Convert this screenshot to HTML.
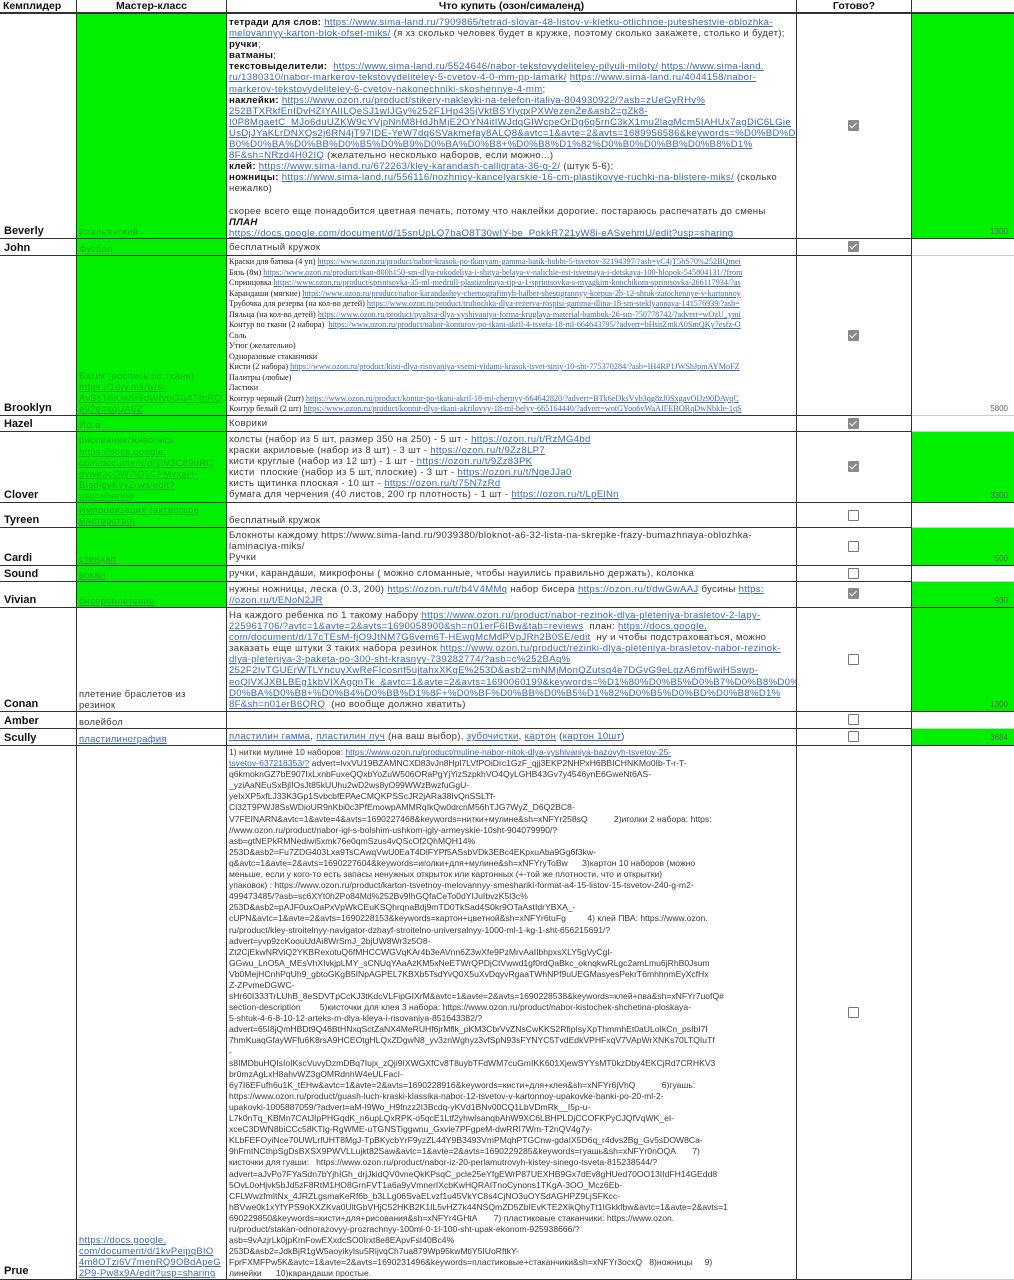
<!DOCTYPE html>
<html><head><meta charset="utf-8">
<style>
*{margin:0;padding:0;box-sizing:border-box}
body{width:1014px;height:1280px;background:#fff;position:relative;overflow:hidden;font-family:"Liberation Sans","Noto Sans CJK SC",sans-serif;color:#3a3a3a}
.c{position:absolute;border-right:1px solid #333;border-bottom:1px solid #333;overflow:hidden}
.g{background:#00f000}
.n{font-weight:bold;font-size:11px;color:#111;display:flex;align-items:flex-end;padding:0 0 0 4px;line-height:13px}
.m{font-size:9.4px;letter-spacing:.3px;line-height:11.1px;display:flex;flex-direction:column;justify-content:flex-end;padding:0 2px 1px 2px}
.g.m,.g.m a{color:#1fae1f}
.t{font-size:9.6px;letter-spacing:.3px;line-height:11.1px;padding:3px 0 0 2px;white-space:nowrap;color:#3a3a3a}
.t.p{font-size:8.6px;letter-spacing:0}
.t div,.m div{white-space:nowrap}
a{color:#3d6ab6;text-decoration:underline}
.t.s{font-family:"Liberation Serif",serif;font-size:8.2px;letter-spacing:0;line-height:10.5px;color:#222}
.h{font-weight:bold;font-size:10.5px;color:#111;text-align:center;line-height:12px;border-bottom:2px solid #333}
.ck{position:absolute;width:11px;height:11px;border:1.5px solid #777;border-radius:1px;background:#fff}
.ck.on{background:#8a8a8a;border-color:#8a8a8a}
.ck.on::after{content:"";position:absolute;left:2px;top:0px;width:3px;height:6px;border:solid #fff;border-width:0 1.5px 1.5px 0;transform:rotate(45deg)}
.v{position:absolute;font-size:8px;color:#666;right:6px}
b{color:#111}
</style></head><body>

<div class="c h" style="left:0;top:0;width:77px;height:14px;text-align:left;padding-left:3px">Кемплидер</div>
<div class="c h" style="left:77px;top:0;width:150px;height:14px">Мастер-класс</div>
<div class="c h" style="left:227px;top:0;width:570px;height:14px">Что купить (озон/сималенд)</div>
<div class="c h" style="left:797px;top:0;width:115px;height:14px">Готово?</div>
<div class="c h" style="left:912px;top:0;width:102px;height:14px;border-right:none"></div>

<!-- Beverly -->
<div class="c n" style="left:0;top:14px;width:77px;height:225px">Beverly</div>
<div class="c g m" style="left:77px;top:14px;width:150px;height:225px"><div>Итальянский</div></div>
<div class="c t" style="left:227px;top:14px;width:570px;height:225px">
<div><b>тетради для слов:</b> <a>https://www.sima-land.ru/7909865/tetrad-slovar-48-listov-v-kletku-otlichnoe-puteshestvie-oblozhka-</a></div>
<div><a>melovannyy-karton-blok-ofset-miks/</a> (я хз сколько человек будет в кружке, поэтому сколько закажете, столько и будет);</div>
<div><b>ручки</b>;</div>
<div><b>ватманы</b>;</div>
<div><b>текстовыделители:</b> &nbsp;<a>https://www.sima-land.ru/5524646/nabor-tekstovydeliteley-pilyuli-miloty/</a> <a>https://www.sima-land.</a></div>
<div><a>ru/1380310/nabor-markerov-tekstovydeliteley-5-cvetov-4-0-mm-pp-lamark/</a> <a>https://www.sima-land.ru/4044158/nabor-</a></div>
<div><a>markerov-tekstovydeliteley-6-cvetov-nakonechniki-skoshennye-4-mm</a>;</div>
<div><b>наклейки:</b> <a>https://www.ozon.ru/product/stikery-nakleyki-na-telefon-italiya-804930922/?asb=zUeGyRHv%</a></div>
<div><a>252BTXRkfEnIDvHZIYAIILQeSJ1wIJGy%252F1Hp435jVktBSYlyqxPXWezenZe&amp;asb2=gZk8-</a></div>
<div><a>I0P8MqaetC_MJo6duUZKW9cYVjpNnM8HdJhMjE2OYN4itIWJdqGIWcpeOrDg6q5rnC3kX1mu2lagMcm5IAHUx7agDiC6LGie</a></div>
<div><a>UsDjJYaKLrDNXQs2j6RN4jT97IDE-YeW7dq6SVakmefay8ALQ8&amp;avtc=1&amp;avte=2&amp;avts=1689956586&amp;keywords=%D0%BD%D0%</a></div>
<div><a>B0%D0%BA%D0%BB%D0%B5%D0%B9%D0%BA%D0%B8+%D0%B8%D1%82%D0%B0%D0%BB%D0%B8%D1%</a></div>
<div><a>8F&amp;sh=NRzd4H02IQ</a> (желательно несколько наборов, если можно...)</div>
<div><b>клей:</b> <a>https://www.sima-land.ru/672263/kley-karandash-calligrata-36-g-2/</a> (штук 5-6);</div>
<div><b>ножницы:</b> <a>https://www.sima-land.ru/556116/nozhnicy-kancelyarskie-16-cm-plastikovye-ruchki-na-blistere-miks/</a> (сколько</div>
<div>нежалко)</div>
<div>&nbsp;</div>
<div>скорее всего еще понадобится цветная печать, потому что наклейки дорогие. постараюсь распечатать до смены</div>
<div><b><i>ПЛАН</i></b></div>
<div><a>https://docs.google.com/document/d/15snUpLQ7baO8T30wIY-be_PokkR721yW8i-eASvehmU/edit?usp=sharing</a></div>
</div>
<div class="c" style="left:797px;top:14px;width:115px;height:225px"><div class="ck on" style="left:51px;top:106px"></div></div>
<div class="c g" style="left:912px;top:14px;width:102px;height:225px;border-right:none"><span class="v" style="bottom:2px">1300</span></div>

<!-- John -->
<div class="c n" style="left:0;top:239px;width:77px;height:17px">John</div>
<div class="c g m" style="left:77px;top:239px;width:150px;height:17px"><div>Футбол</div></div>
<div class="c t" style="left:227px;top:239px;width:570px;height:17px"><div>бесплатный кружок</div></div>
<div class="c" style="left:797px;top:239px;width:115px;height:17px"><div class="ck on" style="left:51px;top:2px"></div></div>
<div class="c" style="left:912px;top:239px;width:102px;height:17px;border-right:none;border-bottom-color:#ccc"></div>

<!-- Brooklyn -->
<div class="c n" style="left:0;top:256px;width:77px;height:160px">Brooklyn</div>
<div class="c g m" style="left:77px;top:256px;width:150px;height:160px"><div>Батик (роспись по ткани)</div><div><a>https://1drv.ms/w/s!</a></div><div><a>AvBsThiOxSr5gWfvgOG4TfhRQ</a></div><div><a>e9?e=xqUA6Z</a></div></div>
<div class="c t s" style="left:227px;top:256px;width:570px;height:160px;padding-top:1px">
<div>Краски для батика (4 уп) <a>https://www.ozon.ru/product/nabor-krasok-po-tkanyam-gamma-batik-hobbi-5-tsvetov-32194397/?asb=yC4jT5hS70%252BQmei</a></div>
<div>Бязь (8м) <a>https://www.ozon.ru/product/tkan-800h150-sm-dlya-rukodeliya-i-shitya-belaya-v-nalichie-est-tsvetnaya-i-detskaya-100-hlopok-545804131/?from</a></div>
<div>Спринцовка <a>https://www.ozon.ru/product/sprintsovka-35-ml-medrull-plastizolnaya-tip-a-1-sprintsovka-s-myagkim-konchikom-sprintsovka-266117934/?as</a></div>
<div>Карандаши (мягкие) <a>https://www.ozon.ru/product/nabor-karandashey-chernografitnyh-halber-shestigrannyy-korpus-2b-12-shtuk-zatochennye-v-kartonnoy</a></div>
<div>Трубочка для резерва (на кол-во детей) <a>https://www.ozon.ru/product/trubochka-dlya-rezerva-rospisi-gamma-dlina-18-sm-steklyannaya-141576939/?asb=</a></div>
<div>Пяльца (на кол-во детей) <a>https://www.ozon.ru/product/pyaltsa-dlya-vyshivaniya-forma-kruglaya-material-bambuk-26-sm-750778742/?advert=wOzU_ymi</a></div>
<div>Контур по ткани (2 набора) &nbsp;<a>https://www.ozon.ru/product/nabor-konturov-po-tkani-akril-4-tsveta-18-ml-664643795/?advert=bHsitZmkA0SmQKy7esfz-O</a></div>
<div>Соль</div>
<div>Утюг (желательно)</div>
<div>Одноразовые стаканчики</div>
<div>Кисти (2 набора) <a>https://www.ozon.ru/product/kisti-dlya-risovaniya-vsemi-vidami-krasok-tsvet-siniy-10-sht-775370284/?asb=IH4RP1JWShJpmAYMoFZ</a></div>
<div>Палитры (любые)</div>
<div>Ластики</div>
<div>Контур черный (2шт) <a>https://www.ozon.ru/product/kontur-po-tkani-akril-18-ml-chernyy-664642820/?advert=BTk6eDksVvb3qg8zJ0SxgavOIJz90DAyqC</a></div>
<div>Контур белый (2 шт) <a>https://www.ozon.ru/product/kontur-dlya-tkani-akrilovyy-18-ml-belyy-665164440/?advert=wotGYoo6vWaAIFEBORqDwNbkle-1qS</a></div>
</div>
<div class="c" style="left:797px;top:256px;width:115px;height:160px"><div class="ck on" style="left:51px;top:74px"></div></div>
<div class="c" style="left:912px;top:256px;width:102px;height:160px;border-right:none;border-bottom-color:#ccc"><span class="v" style="bottom:2px">5800</span></div>

<!-- Hazel -->
<div class="c n" style="left:0;top:416px;width:77px;height:16px">Hazel</div>
<div class="c g m" style="left:77px;top:416px;width:150px;height:16px"><div>Йога</div></div>
<div class="c t" style="left:227px;top:416px;width:570px;height:16px;padding-top:2px"><div>Коврики</div></div>
<div class="c" style="left:797px;top:416px;width:115px;height:16px"><div class="ck on" style="left:51px;top:2px"></div></div>
<div class="c" style="left:912px;top:416px;width:102px;height:16px;border-right:none;border-bottom-color:#ccc"></div>

<!-- Clover -->
<div class="c n" style="left:0;top:432px;width:77px;height:71px">Clover</div>
<div class="c g m" style="left:77px;top:432px;width:150px;height:71px"><div>рисование/живопись</div><div><a>https://docs.google.</a></div><div><a>com/document/d/1W3C89uRC</a></div><div><a>dvwe3cOW7lQ1CFMvxaH-</a></div><div><a>BIsdigyKvyZrws/edit?</a></div><div><a>usp=sharing</a></div></div>
<div class="c t" style="left:227px;top:432px;width:570px;height:71px;padding-top:2px">
<div>холсты (набор из 5 шт, размер 350 на 250) - 5 шт - <a>https://ozon.ru/t/RzMG4bd</a></div>
<div>краски акриловые (набор из 8 шт) - 3 шт - <a>https://ozon.ru/t/9Zz8LP7</a></div>
<div>кисти круглые (набор из 12 шт) - 1 шт - <a>https://ozon.ru/t/9Zz83PK</a></div>
<div>кисти &nbsp;плоские (набор из 5 шт, плоские) - 3 шт - <a>https://ozon.ru/t/NgeJJa0</a></div>
<div>кисть щитинка плоская - 10 шт - <a>https://ozon.ru/t/75N7zRd</a></div>
<div>бумага для черчения (40 листов, 200 гр плотность) - 1 шт - <a>https://ozon.ru/t/LpElNn</a></div>
</div>
<div class="c" style="left:797px;top:432px;width:115px;height:71px"><div class="ck on" style="left:51px;top:29px"></div></div>
<div class="c g" style="left:912px;top:432px;width:102px;height:71px;border-right:none"><span class="v" style="bottom:2px">3300</span></div>

<!-- Tyreen -->
<div class="c n" style="left:0;top:503px;width:77px;height:25px">Tyreen</div>
<div class="c g m" style="left:77px;top:503px;width:150px;height:25px"><div><a>Импровизация (актёрское</a></div><div><a>мастерство)</a></div></div>
<div class="c t" style="left:227px;top:503px;width:570px;height:25px;padding-top:12px"><div>бесплатный кружок</div></div>
<div class="c" style="left:797px;top:503px;width:115px;height:25px"><div class="ck" style="left:51px;top:7px"></div></div>
<div class="c" style="left:912px;top:503px;width:102px;height:25px;border-right:none;border-bottom-color:#ccc"></div>

<!-- Cardi -->
<div class="c n" style="left:0;top:528px;width:77px;height:38px">Cardi</div>
<div class="c g m" style="left:77px;top:528px;width:150px;height:38px"><div><a>стендап</a></div></div>
<div class="c t" style="left:227px;top:528px;width:570px;height:38px;padding-top:2px">
<div>Блокноты каждому https://www.sima-land.ru/9039380/bloknot-a6-32-lista-na-skrepke-frazy-bumazhnaya-oblozhka-</div>
<div>laminaciya-miks/</div><div>Ручки</div></div>
<div class="c" style="left:797px;top:528px;width:115px;height:38px"><div class="ck" style="left:51px;top:13px"></div></div>
<div class="c g" style="left:912px;top:528px;width:102px;height:38px;border-right:none"><span class="v" style="bottom:2px">500</span></div>

<!-- Sound -->
<div class="c n" style="left:0;top:566px;width:77px;height:16px">Sound</div>
<div class="c g m" style="left:77px;top:566px;width:150px;height:16px"><div><a>вокал</a></div></div>
<div class="c t" style="left:227px;top:566px;width:570px;height:16px;padding-top:2px"><div>ручки, карандаши, микрофоны ( можно сломанные, чтобы науились правильно держать), колонка</div></div>
<div class="c" style="left:797px;top:566px;width:115px;height:16px"><div class="ck" style="left:51px;top:2px"></div></div>
<div class="c" style="left:912px;top:566px;width:102px;height:16px;border-right:none;border-bottom-color:#ccc"></div>

<!-- Vivian -->
<div class="c n" style="left:0;top:582px;width:77px;height:26px">Vivian</div>
<div class="c g m" style="left:77px;top:582px;width:150px;height:26px"><div><a>бисероплетение</a></div></div>
<div class="c t" style="left:227px;top:582px;width:570px;height:26px;padding-top:2px">
<div>нужны ножницы, леска (0.3, 200) <a>https://ozon.ru/t/b4V4MMq</a> набор бисера <a>https://ozon.ru/t/dwGwAAJ</a> бусины <a>https:</a></div>
<div><a>//ozon.ru/t/ENoN2JR</a></div></div>
<div class="c" style="left:797px;top:582px;width:115px;height:26px"><div class="ck on" style="left:51px;top:6px"></div></div>
<div class="c g" style="left:912px;top:582px;width:102px;height:26px;border-right:none"><span class="v" style="bottom:2px">930</span></div>

<!-- Conan -->
<div class="c n" style="left:0;top:608px;width:77px;height:104px">Conan</div>
<div class="c m" style="left:77px;top:608px;width:150px;height:104px"><div>плетение браслетов из</div><div>резинок</div></div>
<div class="c t" style="left:227px;top:608px;width:570px;height:104px;padding-top:2px">
<div>На каждого ребенка по 1 такому набору <a>https://www.ozon.ru/product/nabor-rezinok-dlya-pleteniya-brasletov-2-lapy-</a></div>
<div><a>225961706/?avtc=1&amp;avte=2&amp;avts=1690058900&amp;sh=n01erF6IBw&amp;tab=reviews</a> &nbsp;план: <a>https://docs.google.</a></div>
<div><a>com/document/d/17cTEsM-fjO9JtNM7G6vem6T-HEwgMcMdPVpJRh2B0SE/edit</a> &nbsp;ну и чтобы подстраховаться, можно</div>
<div>заказать еще штуки 3 таких набора резинок <a>https://www.ozon.ru/product/rezinki-dlya-pleteniya-brasletov-nabor-rezinok-</a></div>
<div><a>dlya-pleteniya-3-paketa-po-300-sht-krasnyy-739282774/?asb=c%252BAq%</a></div>
<div><a>252F2IvTGUErWTLYncuyXwReFIcosnf5ujtahxXKqE%253D&amp;asb2=mNMjMonQZutsg4e7DGvG9eLgzA6mf6wiHSswp-</a></div>
<div><a>eoQlVXJXBLBEg1kbVIXAggnTk_&amp;avtc=1&amp;avte=2&amp;avts=1690060199&amp;keywords=%D1%80%D0%B5%D0%B7%D0%B8%D0%BD%</a></div>
<div><a>D0%BA%D0%B8+%D0%B4%D0%BB%D1%8F+%D0%BF%D0%BB%D0%B5%D1%82%D0%B5%D0%BD%D0%B8%D1%</a></div>
<div><a>8F&amp;sh=n01erB6QRQ</a> &nbsp;(но вообще должно хватить)</div></div>
<div class="c" style="left:797px;top:608px;width:115px;height:104px"><div class="ck" style="left:51px;top:46px"></div></div>
<div class="c g" style="left:912px;top:608px;width:102px;height:104px;border-right:none"><span class="v" style="bottom:2px">1300</span></div>

<!-- Amber -->
<div class="c n" style="left:0;top:712px;width:77px;height:17px">Amber</div>
<div class="c m" style="left:77px;top:712px;width:150px;height:17px"><div>волейбол</div></div>
<div class="c t" style="left:227px;top:712px;width:570px;height:17px"></div>
<div class="c" style="left:797px;top:712px;width:115px;height:17px"><div class="ck" style="left:51px;top:2px"></div></div>
<div class="c" style="left:912px;top:712px;width:102px;height:17px;border-right:none;border-bottom-color:#ccc"></div>

<!-- Scully -->
<div class="c n" style="left:0;top:729px;width:77px;height:17px">Scully</div>
<div class="c m" style="left:77px;top:729px;width:150px;height:17px"><div><a>пластилинография</a></div></div>
<div class="c t" style="left:227px;top:729px;width:570px;height:17px;padding-top:2px"><div><a>пластилин гамма</a>, <a>пластилин луч</a> (на ваш выбор), <a>зубочистки</a>, <a>картон</a> (<a>картон 10шт</a>)</div></div>
<div class="c" style="left:797px;top:729px;width:115px;height:17px"><div class="ck" style="left:51px;top:2px"></div></div>
<div class="c g" style="left:912px;top:729px;width:102px;height:17px;border-right:none"><span class="v" style="bottom:3px">3684</span></div>

<!-- Prue -->
<div class="c n" style="left:0;top:746px;width:77px;height:534px;padding-bottom:1px">Prue</div>
<div class="c m" style="left:77px;top:746px;width:150px;height:534px"><div><a>https://docs.google.</a></div><div><a>com/document/d/1kvPeipqBIO</a></div><div><a>4m8OTzi6V7menRQ9OBdApeG</a></div><div><a>2P9-Pw8x9A/edit?usp=sharing</a></div></div>
<div class="c t p" style="left:227px;top:746px;width:570px;height:534px;padding-top:1px">
<div>1) нитки мулине 10 наборов: <a>https://www.ozon.ru/product/muline-nabor-nitok-dlya-vyshivaniya-bazovyh-tsvetov-25-</a></div>
<div><a>tsvetov-637218353/?</a> advert=lvxVU19BZAMNCXD83vJn8Hpl7LVfPOiDrc1GzF_qjj3EKP2NHPxH6BBICHNKMo0Ib-T-r-T-</div>
<div>q6kmoknGZ7bE907IxLxnbFuxeQQxbYoZuW506ORaPgYjYizSzpkhVO4QyLGHB43Gv7y4546ynE6GweNt6AS-</div>
<div>_yziAaNEuSxBjlIOsJt85kUUhu2wD2ws8yO99WWzBwzfuGgU-</div>
<div>yeIxXP5xfLJ33K3Gp1SvbcbfEPAeCMQKPSScJR2jARa38IvQnSSLTf-</div>
<div>Cl32T9PWJ8SsWDioUR9nKbi0c3PfEmowpAMMRqIkQw0drcnM56hTJG7WyZ_D6Q2BC8-</div>
<div>V7FEINARN&amp;avtc=1&amp;avte=4&amp;avts=1690227468&amp;keywords=нитки+мулине&amp;sh=xNFYr258sQ &nbsp; &nbsp; &nbsp; &nbsp; &nbsp; 2)иголки 2 набора: https:</div>
<div>//www.ozon.ru/product/nabor-igl-s-bolshim-ushkom-igly-armeyskie-10sht-904079990/?</div>
<div>asb=gtNEPkRMNediwi5xmk76e0qmSzus4vQScOf2QhMQH14%</div>
<div>253D&amp;asb2=Fu7ZDG403Lxa9TsCAwqVwU0EaT4DlFYPf5ASsbVDk3EBc4EKpxuAba9Gg6f3kw-</div>
<div>q&amp;avtc=1&amp;avte=2&amp;avts=1690227604&amp;keywords=иголки+для+мулине&amp;sh=xNFYryToBw &nbsp; &nbsp; &nbsp;3)картон 10 наборов (можно</div>
<div>меньше, если у кого-то есть запасы ненужных открыток или картонных (+-той же плотности, что и открытки)</div>
<div>упаковок) : https://www.ozon.ru/product/karton-tsvetnoy-melovannyy-smeshariki-format-a4-15-listov-15-tsvetov-240-g-m2-</div>
<div>499473485/?asb=sc6XYt0h2Po84Md%252Bv9IhGQfaCeTo0dYIJuIbvzK5l3c%</div>
<div>253D&amp;asb2=pAJF0uxOaPxVpWkCEuKSQhrqnaBdj9mTD0TkSad4S0kr9OTaAstIdrYBXA_-</div>
<div>cUPN&amp;avtc=1&amp;avte=2&amp;avts=1690228153&amp;keywords=картон+цветной&amp;sh=xNFYr6tuFg &nbsp; &nbsp; &nbsp; &nbsp; 4) клей ПВА: https://www.ozon.</div>
<div>ru/product/kley-stroitelnyy-navigator-dzhayf-stroitelno-universalnyy-1000-ml-1-kg-1-sht-656215691/?</div>
<div>advert=yvp9zcKoouUdAi8WrSmJ_2bjUW8Wr3z5O8-</div>
<div>Zt2CjEkwNRViQ2YKBRexotuQ6fMHCCWGVqKAr4b3eAVnn6Z3wXfe9PzMrvAaIIbhpxsXLY5gVyCgI-</div>
<div>GGwu_LnO5A_MEsVhXIvkjpLMY_sCNUqYAaAzKM5xNeETWrQPDjCtVwwd1gf0rdQaBkc_oknqkwRLgc2amLmu6jRhB0Jsum</div>
<div>Vb0MejHCnhPqUh9_gbtoGKgB5INpAGPEL7KBXb5TsdYvQ0X5uXvDqyvRgaaTWhNPf9uUEGMasyesPekrT6mhhnmEyXcfHx</div>
<div>Z-ZPvmeDGWC-</div>
<div>sHr60I333TrLUhB_8eSDVTpCcKJ3tKdcVLFipGIXrM&amp;avtc=1&amp;avte=2&amp;avts=1690228538&amp;keywords=клей+пва&amp;sh=xNFYr7uofQ#</div>
<div>section-description &nbsp; &nbsp; &nbsp; &nbsp;5)кисточки для клея 3 набора: https://www.ozon.ru/product/nabor-kistochek-shchetina-ploskaya-</div>
<div>5-shtuk-4-6-8-10-12-arteks-m-dlya-kleya-i-risovaniya-851643382/?</div>
<div>advert=65I8jQmHBDt9Q46BtHNxqSctZaNX4MeRUHf6jrMflk_pKM3CbrVvZNsCwKKS2RfipIsyXpThmmhEt0aULoIkCn_psIbI7I</div>
<div>7hmKuaqGfayWFfu6K8rsA9HCEOtgHLQxZDgwN8_yv3znWghyz3vfSpN93sFYNYC5TvdEdkVPHFxqV7VApWrXNKs70LTQIuTf</div>
<div>-</div>
<div>s8IMDbuHQIsIoIKscVuvyDzmDBq7Iujx_zQji9IXWGXfCv8T8uybTFdWM7cuGmIKK601XjewSYYsMT0kzDby4EKCjRd7CRHKV3</div>
<div>br0mzAgLxH8ahvWZ3gOMRdnhW4eULFacI-</div>
<div>6y7I6EFufh6u1K_tEHw&amp;avtc=1&amp;avte=2&amp;avts=1690228916&amp;keywords=кисти+для+клея&amp;sh=xNFYr6jVhQ &nbsp; &nbsp; &nbsp; &nbsp; &nbsp; 6)гуашь:</div>
<div>https://www.ozon.ru/product/guash-luch-kraski-klassika-nabor-12-tsvetov-v-kartonnoy-upakovke-banki-po-20-ml-2-</div>
<div>upakovki-1005887059/?advert=aM-I9Wo_H9fnzz2I3Bcdq-yKVd1BNv00CQ1LbVDmRk__I5p-u-</div>
<div>L7k0nTq_KBMn7CAtJIpPHGqdK_n6upLQxRPK-o5qcE1Ltf2yhwIsanqbAhW9XC6LBHPLDjCCOFKPyCJQfVqWK_eI-</div>
<div>xceC3DWN8biCCc58KTIg-RgWME-uTGNSTiggwnu_Gxvle7PFgpeM-dwRRI7Wm-T2nQV4g7y-</div>
<div>KLbFEFOyiNce70UWLrIUHT8MgJ-TpBKycbYrF9yzZL44Y9B3493VmPMqhPTGCnw-gdaIX5D6q_r4dvs2Bg_Gv5sDOW8Ca-</div>
<div>9hFmtNCthpSgDsBXSX9PWVLLujkt82Saw&amp;avtc=1&amp;avte=2&amp;avts=1690229285&amp;keywords=гуашь&amp;sh=xNFYr0nOQA &nbsp; &nbsp; &nbsp; 7)</div>
<div>кисточки для гуаши: &nbsp; https://www.ozon.ru/product/nabor-iz-20-perlamutrovyh-kistey-sinego-tsveta-815238544/?</div>
<div>advert=aJvPo7FYaSdn7bYjhIGh_drjJkidQV0vneQkKPsqC_pcle25eYfgEWrP87UEXHB9Gx7dEv8gHUed70OO13IIdFH14GEdd8</div>
<div>5OvL0oHjvk5bJd5zF8RtM1HO8GrnFVT1a6a9yVmnerIXcbKwHQRAITnoCynons1TKgA-3OO_Mcz6Eb-</div>
<div>CFLWwzfmItNx_4JRZLgsmaKeRf6b_b3LLg06SvaELvzf1u45VkYC8s4CjNO3uOYSdAGHPZ9LjSFKcc-</div>
<div>hBVwe0k1xYfYPS9oKXZKva0UltGbVHjC52HKB2K1IL5vHZ7k44NSQmZD5ZbIEvKTE2XikQhyTt1IGkkfbw&amp;avtc=1&amp;avte=2&amp;avts=1</div>
<div>690229850&amp;keywords=кисти+для+рисования&amp;sh=xNFYr4GHtA &nbsp; &nbsp; &nbsp; 7) пластиковые стаканчики: https://www.ozon.</div>
<div>ru/product/stakan-odnorazovyy-prozrachnyy-100ml-0-1l-100-sht-upak-ekonom-925938666/?</div>
<div>asb=9vAzjrLk0jpKmFowEXxdcSO0Irxt8e8EApvFsI40Bc4%</div>
<div>253D&amp;asb2=JdkBjR1gW5aoyikylsu5RijvqCh7ua879Wp95kwMtiY5IUoRftkY-</div>
<div>FprFXMFPw5K&amp;avtc=1&amp;avte=2&amp;avts=1690231496&amp;keywords=пластиковые+стаканчики&amp;sh=xNFYr3ocxQ &nbsp; 8)ножницы &nbsp; &nbsp; 9)</div>
<div>линейки &nbsp; &nbsp; &nbsp;10)карандаши простые.</div>
</div>
<div class="c" style="left:797px;top:746px;width:115px;height:534px"><div class="ck" style="left:51px;top:261px"></div></div>
<div class="c" style="left:912px;top:746px;width:102px;height:534px;border-right:none;border-bottom-color:#ccc"></div>
</body></html>
